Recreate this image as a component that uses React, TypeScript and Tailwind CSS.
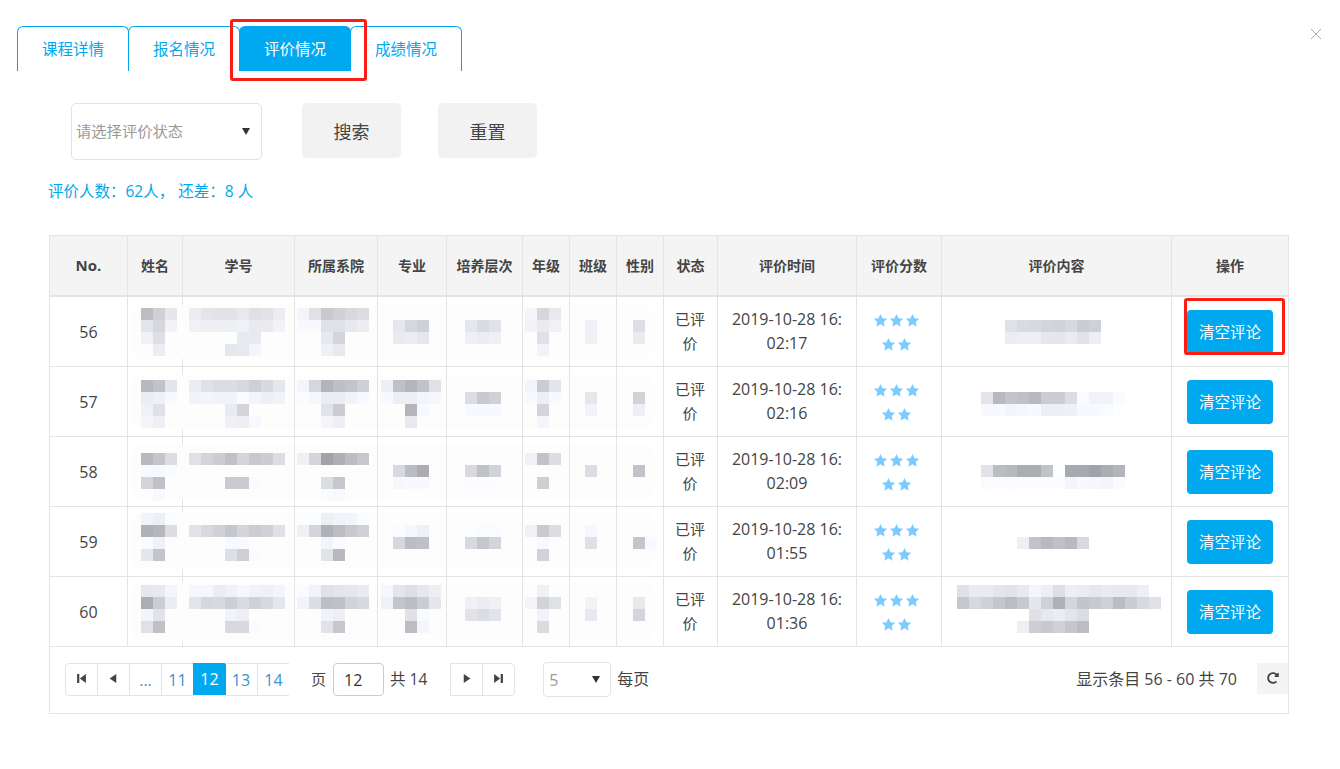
import React from "react";
import { FaRedoAlt } from "react-icons/fa";

type Row = {
  no: number;
  time: string;
  pad: string;
  halo: string;
  m: string[][];
};

const cols = [
  "w-[78px]", "w-[55px]", "w-[112px]", "w-[83px]", "w-[69px]", "w-[76px]", "w-[47px]",
  "w-[47px]", "w-[47px]", "w-[54px]", "w-[139px]", "w-[85px]", "w-[230px]", "w-[116px]",
];
const heads = ["姓名", "学号", "所属系院", "专业", "培养层次", "年级", "班级", "性别", "状态", "评价时间", "评价分数", "评价内容", "操作"];
const insets = ["pl-[13px]", "pl-[6px]", "pl-[2px]", "pl-[3px]", "pl-[6px]", "pl-[2px]", "pl-[3px]", "pl-[4px]"];

const rows: Row[] = [
  {
    no: 56, time: "02:17", pad: "pt-[11px]", halo: "top-[8px] h-[54px]",
    m: [
      ["bc cf e6", "e3 d6 f2", "f0 df ..", ".. ec .."],
      ["ec e4 e2 e2 e8 df e2 ec", "f0 ee ee ee f0 e9 ea f2", ".. .. .. fe e9 e9", ".. .. .. e6 e8 f4"],
      ["f4 e0 c9 d0 d8 dc", "f8 f8 e0 e0 e8 ec", ".. .. e8 d4", ".. .. f0 e8"],
      ["", ".. e6 d6 cf", ".. ea ec e6", ""],
      ["", ".. e6 da e2", ".. ef ec ef", ""],
      ["f4 d6 e8", "f2 ea f0", ".. e0", ".. f2"],
      ["", ".. f0", ".. f0", ""],
      ["", ".. de", ".. ea", ""],
      ["", ".. .. .. .. .. e0 da d8 d4 d2 d8 cc d0", ".. .. .. .. .. ec ee ee e6 e6 ea e2 ee", ""],
    ],
  },
  {
    no: 57, time: "02:16", pad: "pt-[13px]", halo: "top-[8px] h-[54px]",
    m: [
      ["b8 c2 e4", "ec f0 f8", "f0 e0", "f4 ee"],
      ["ec e0 dc dc d8 cf d9 e6", "f2 f4 f2 f2 fa f4 ee f2", ".. .. .. ea d4", ".. .. .. f0 ee f8"],
      ["f4 d6 b4 bf c4 cf", "fa f6 ec ec f2 f8", ".. .. e2 cb", ".. .. f4 ee"],
      ["ee c0 b4 c2 e0", "f8 ee ee f4 f6", ".. .. b4 f8", ".. .. e8"],
      ["", ".. dc c8 d0", ".. f8 f8 f8", ""],
      ["f4 cc e4", "f8 ee f8", ".. d4", ".. f4"],
      ["", ".. e6", ".. f2", ""],
      ["", ".. d2", ".. ee", ""],
      ["", ".. .. .. e4 b8 c4 c0 b8 cc cc dc fa f2 f2 fa", ".. .. .. f8 f8 f4 f6 f8 ee ee f0 f8 f8 fa fd", ""],
    ],
  },
  {
    no: 58, time: "02:09", pad: "pt-[16px]", halo: "top-[8px] h-[54px]",
    m: [
      ["b8 c4 dc", "f8 f8 fa", "d4 c0", ".. f8"],
      ["e0 d4 cc c0 d4 c8 cc dc", "", ".. .. .. ca ca fa", ""],
      ["f0 d4 a2 ae bc c6", "", ".. .. dc c6", ".. .. fa f8"],
      ["", ".. d8 bc ac", ".. f6 f8 f8", ""],
      ["", ".. d8 c0 d2", ".. fb fb fb", ""],
      ["f0 c2 dc", "", ".. ce", ""],
      ["", ".. dc", "", ""],
      ["", ".. c2", "", ""],
      ["", ".. .. .. e2 bc b8 ac ac c2 fd a8 a8 a2 ac b4", ".. .. .. fa fb fa fb fb fb fb f4 f8 f6 f4 fa", ""],
    ],
  },
  {
    no: 59, time: "01:55", pad: "pt-[6px]", halo: "top-[5px] h-[57px]",
    m: [
      ["f2 ee fa", "b0 b6 dc", "fa f0", "e6 c4"],
      ["", "e2 d8 d0 c6 d4 cc d0 e0", ".. .. .. f8 f8", ".. .. .. de ce fa"],
      ["fc fc ee f2 f4 fa", "f0 d4 b0 bc c8 d0", ".. .. f4 fa", ".. .. e2 b8"],
      ["", ".. fa f6 f0", ".. d6 bc c0", ""],
      ["", ".. fc fa fa", ".. d8 c6 d4", ""],
      ["", "f0 ca dc", ".. f8", ".. d2"],
      ["", ".. f6", ".. e0", ""],
      ["", ".. fc", ".. c4 f8", ""],
      ["", "", ".. .. .. .. .. .. ee c2 b8 c0 b8 d8", ""],
    ],
  },
  {
    no: 60, time: "01:36", pad: "pt-[8px]", halo: "top-[5px] h-[59px]",
    m: [
      ["e6 e8 f4", "ac cc ec", "f4 e2", "e0 c0"],
      ["f6 f6 ec f0 f6 f2 f0 f4", "e4 d6 d8 ce da d0 d8 e6", ".. .. .. f2 ee", ".. .. .. d8 d8 fa"],
      ["fa f2 e0 e4 e6 ea", "f2 dc be c0 d2 d8", ".. .. f2 ee", ".. .. e2 c6"],
      ["f6 e4 de e6 ee", "f0 c4 bc cc e6", ".. .. e0 fa", ".. .. bc f4"],
      ["", ".. f0 ec f0", ".. e2 dc e2", ""],
      [".. f0 fc", "f4 d2 e0", ".. f2", ".. da"],
      ["", ".. f2", ".. e8", ""],
      ["", ".. e8", ".. d4", ""],
      [
        ".. e0 ea ea e4 e2 e8 f4 ee de ee ec e6 ea e8 e8 ee",
        ".. c6 d8 d0 c6 bc c8 e6 d0 b0 d4 c4 c8 d0 bc cc d8 e0",
        ".. .. .. .. .. .. .. e0 e8 ec e4 dc",
        ".. .. .. .. .. .. ee cd c8 d0 c6 bc",
      ],
    ],
  },
];

function tint(c: string) {
  const v = parseInt(c, 16);
  return `rgb(${v - 1},${v + 1},${Math.min(255, v + 6)})`;
}

function Mosaic({ data }: { data: string[] }) {
  return (
    <div className="relative z-10 flex flex-col">
      {data.map((line, i) => (
        <div key={i} className="flex h-[12px]">
          {line
            .split(" ")
            .filter(Boolean)
            .map((c, j) => (
              <div
                key={j}
                className="h-[12px] w-[12px] shrink-0"
                style={c === ".." ? undefined : { backgroundColor: tint(c) }}
              />
            ))}
        </div>
      ))}
    </div>
  );
}

function Star() {
  return (
    <svg viewBox="0 0 24 24" className="h-[15px] w-[15px] shrink-0" fill="#7ccbff">
      <path d="M12 1.5l3.2 6.9 7.5.9-5.6 5.1 1.5 7.4L12 18.1l-6.6 3.7 1.5-7.4L1.3 9.3l7.5-.9z" />
    </svg>
  );
}

function Arrow({ kind }: { kind: "first" | "prev" | "next" | "last" }) {
  const d = {
    first: "M1 1h2v8H1zM9 1v8L3.5 5z",
    prev: "M7.5 1v8L1.5 5z",
    next: "M2.5 1v8l6-4z",
    last: "M7 1h2v8H7zM1 1v8l5.5-4z",
  }[kind];
  return (
    <svg viewBox="0 0 10 10" className="mb-[2px] h-[11px] w-[11px]" fill="#444">
      <path d={d} />
    </svg>
  );
}

function Caret() {
  return (
    <svg viewBox="0 0 8 7" className="h-[7px] w-[8px]" fill="#333">
      <path d="M0 0h8L4 7z" />
    </svg>
  );
}

export default function App() {
  return (
    <div
      className="relative h-[769px] w-[1340px] overflow-hidden bg-white pt-[26px] text-[#444]"
      style={{ fontFamily: '"Open Sans","Noto Sans CJK SC",sans-serif' }}
    >
      <svg viewBox="0 0 10 10" className="absolute left-[1311px] top-[29px] h-[10px] w-[10px]" stroke="#aaa" strokeWidth="1">
        <path d="M0 0l10 10M10 0L0 10" />
      </svg>
      <div className="absolute left-[230px] top-[19px] z-20 h-[62px] w-[137px] rounded-[3px] border-[3px] border-[#fb1d12]" />

      <div className="ml-[17px] flex h-[45px] text-[15.5px] text-[#00a8ef]">
        <div className="flex w-[112px] items-center justify-center rounded-t-[6px] border border-b-0 border-[#00a8ef] pt-[2px]">课程详情</div>
        <div className="-ml-px flex w-[112px] items-center justify-center rounded-t-[6px] border border-b-0 border-[#00a8ef] pt-[2px]">报名情况</div>
        <div className="relative z-10 -ml-px flex w-[112px] items-center justify-center rounded-t-[6px] bg-[#00a8ef] pt-[2px] text-white">评价情况</div>
        <div className="-ml-px flex w-[112px] items-center justify-center rounded-t-[6px] border border-b-0 border-[#00a8ef] pt-[2px]">成绩情况</div>
      </div>

      <div className="ml-[71px] mt-[32px] flex items-start">
        <div className="flex h-[57px] w-[191px] items-center justify-between rounded-[5px] border border-[#e2e2e2] pl-[4px] pr-[11px] text-[15.3px] text-[#999]">
          <span>请选择评价状态</span>
          <Caret />
        </div>
        <button className="ml-[40px] h-[55px] w-[99px] rounded-[5px] bg-[#f2f2f2] pt-[3px] text-[18px] text-[#444]">搜索</button>
        <button className="ml-[37px] h-[55px] w-[99px] rounded-[5px] bg-[#f2f2f2] pt-[3px] text-[18px] text-[#444]">重置</button>
      </div>

      <div className="ml-[48px] mt-[20px] h-[22px] text-[15.5px] leading-[22px] text-[#00a8ef]">评价人数：62人， 还差：8 人</div>

      <div className="ml-[49px] mt-[33px] h-[479px] w-[1240px] border border-[#e4e4e4]">
        <table className="w-[1238px] table-fixed border-separate border-spacing-0">
          <colgroup>
            {cols.map((c, i) => (
              <col key={i} className={c} />
            ))}
          </colgroup>
          <thead>
            <tr className="bg-[#f4f4f4]">
              <th className="h-[61px] border-b-2 border-r border-[#e4e4e4] p-0 text-center text-[15px] font-bold">No.</th>
              {heads.map((h, i) => (
                <th
                  key={h}
                  className={`h-[61px] border-b-2 border-[#e4e4e4] p-0 text-center text-[14px] font-bold ${i === heads.length - 1 ? "" : "border-r"}`}
                >
                  {h}
                </th>
              ))}
            </tr>
          </thead>
          <tbody>
            {rows.map((r, ri) => (
              <tr key={r.no}>
                <td className="h-[70px] border-b border-r border-[#e4e4e4] p-0 text-center text-[16px]">{r.no}</td>
                {insets.map((inset, i) => (
                  <td key={i} className={`relative h-[70px] border-b border-r border-[#e4e4e4] p-0 align-top ${r.pad} ${inset}`}>
                    {i === 0 && <div className={`absolute left-[2px] w-[525px] rounded-[14px] bg-[#fdfdfd] ${r.halo}`} />}
                    <Mosaic data={r.m[i]} />
                  </td>
                ))}
                <td className="h-[70px] border-b border-r border-[#e4e4e4] p-0 pb-[2px] pr-[1px] text-center text-[15px] leading-[24px]">
                  <div className="mx-auto w-[32px]">已评价</div>
                </td>
                <td className="h-[70px] border-b border-r border-[#e4e4e4] p-0 pb-[2px] text-center text-[16px] leading-[24px]">
                  2019-10-28 16:
                  <br />
                  {r.time}
                </td>
                <td className="h-[70px] border-b border-r border-[#e4e4e4] p-0 pr-[6px] pt-[2px]">
                  <div className="mx-auto flex w-[50px] flex-wrap justify-center gap-x-[1px] gap-y-[9px]">
                    <Star />
                    <Star />
                    <Star />
                    <Star />
                    <Star />
                  </div>
                </td>
                <td className={`h-[70px] border-b border-r border-[#e4e4e4] p-0 pl-[3px] align-top ${r.pad}`}>
                  <Mosaic data={r.m[8]} />
                </td>
                <td className="relative h-[70px] border-b border-[#e4e4e4] p-0">
                  <button className="mx-auto flex h-[44px] w-[86px] items-center justify-center rounded-[4px] bg-[#00a8ef] pt-[2px] text-[15.5px] text-white">
                    清空评论
                  </button>
                  {ri === 0 && (
                    <div className="absolute left-[12px] top-[1px] h-[57px] w-[101px] rounded-[3px] border-[3px] border-[#fb1d12]" />
                  )}
                </td>
              </tr>
            ))}
          </tbody>
        </table>

        <div className="flex h-[66px] items-start pl-[15px] pt-[16px] text-[16px]">
          <div className="flex h-[33px] text-[#3f8fd2]">
            <div className="flex h-[33px] w-[33px] items-center justify-center rounded-l-[4px] border border-[#e4e4e4]"><Arrow kind="first" /></div>
            <div className="-ml-px flex h-[33px] w-[33px] items-center justify-center border border-[#e4e4e4]"><Arrow kind="prev" /></div>
            <div className="-ml-px flex h-[33px] w-[33px] items-center justify-center border border-[#e4e4e4]">...</div>
            <div className="-ml-px flex h-[33px] w-[33px] items-center justify-center border border-[#e4e4e4]">11</div>
            <div className="-ml-px flex h-[32px] w-[33px] items-center justify-center bg-[#00a8ef] text-white">12</div>
            <div className="-ml-px flex h-[33px] w-[33px] items-center justify-center border-y border-r border-[#e4e4e4]">13</div>
            <div className="flex h-[33px] w-[31px] items-center justify-center border-y border-[#e4e4e4]">14</div>
          </div>
          <span className="ml-[22px] text-[15px] leading-[33px]">页</span>
          <div className="ml-[7px] flex h-[33px] w-[51px] items-center rounded-[4px] border border-[#ccc] pl-[10px] text-[#333]">12</div>
          <span className="ml-[6px] text-[15.5px] leading-[33px]">共 14</span>
          <div className="ml-[23px] flex h-[33px]">
            <div className="flex h-[33px] w-[33px] items-center justify-center border border-[#e4e4e4]"><Arrow kind="next" /></div>
            <div className="-ml-px flex h-[33px] w-[33px] items-center justify-center rounded-r-[4px] border border-[#e4e4e4]"><Arrow kind="last" /></div>
          </div>
          <div className="-mt-px ml-[28px] flex h-[35px] w-[68px] items-center justify-between rounded-[4px] border border-[#e4e4e4] pl-[5px] pr-[10px] text-[#999]">
            <span>5</span>
            <Caret />
          </div>
          <span className="ml-[6px] leading-[33px]">每页</span>
          <span className="ml-auto mr-[20px] leading-[33px]">显示条目 56 - 60 共 70</span>
          <div className="flex h-[31px] w-[31px] items-center justify-center bg-[#f4f4f4]">
            <FaRedoAlt className="mb-[2px] h-[12px] w-[12px] text-[#444]" />
          </div>
        </div>
      </div>
    </div>
  );
}
